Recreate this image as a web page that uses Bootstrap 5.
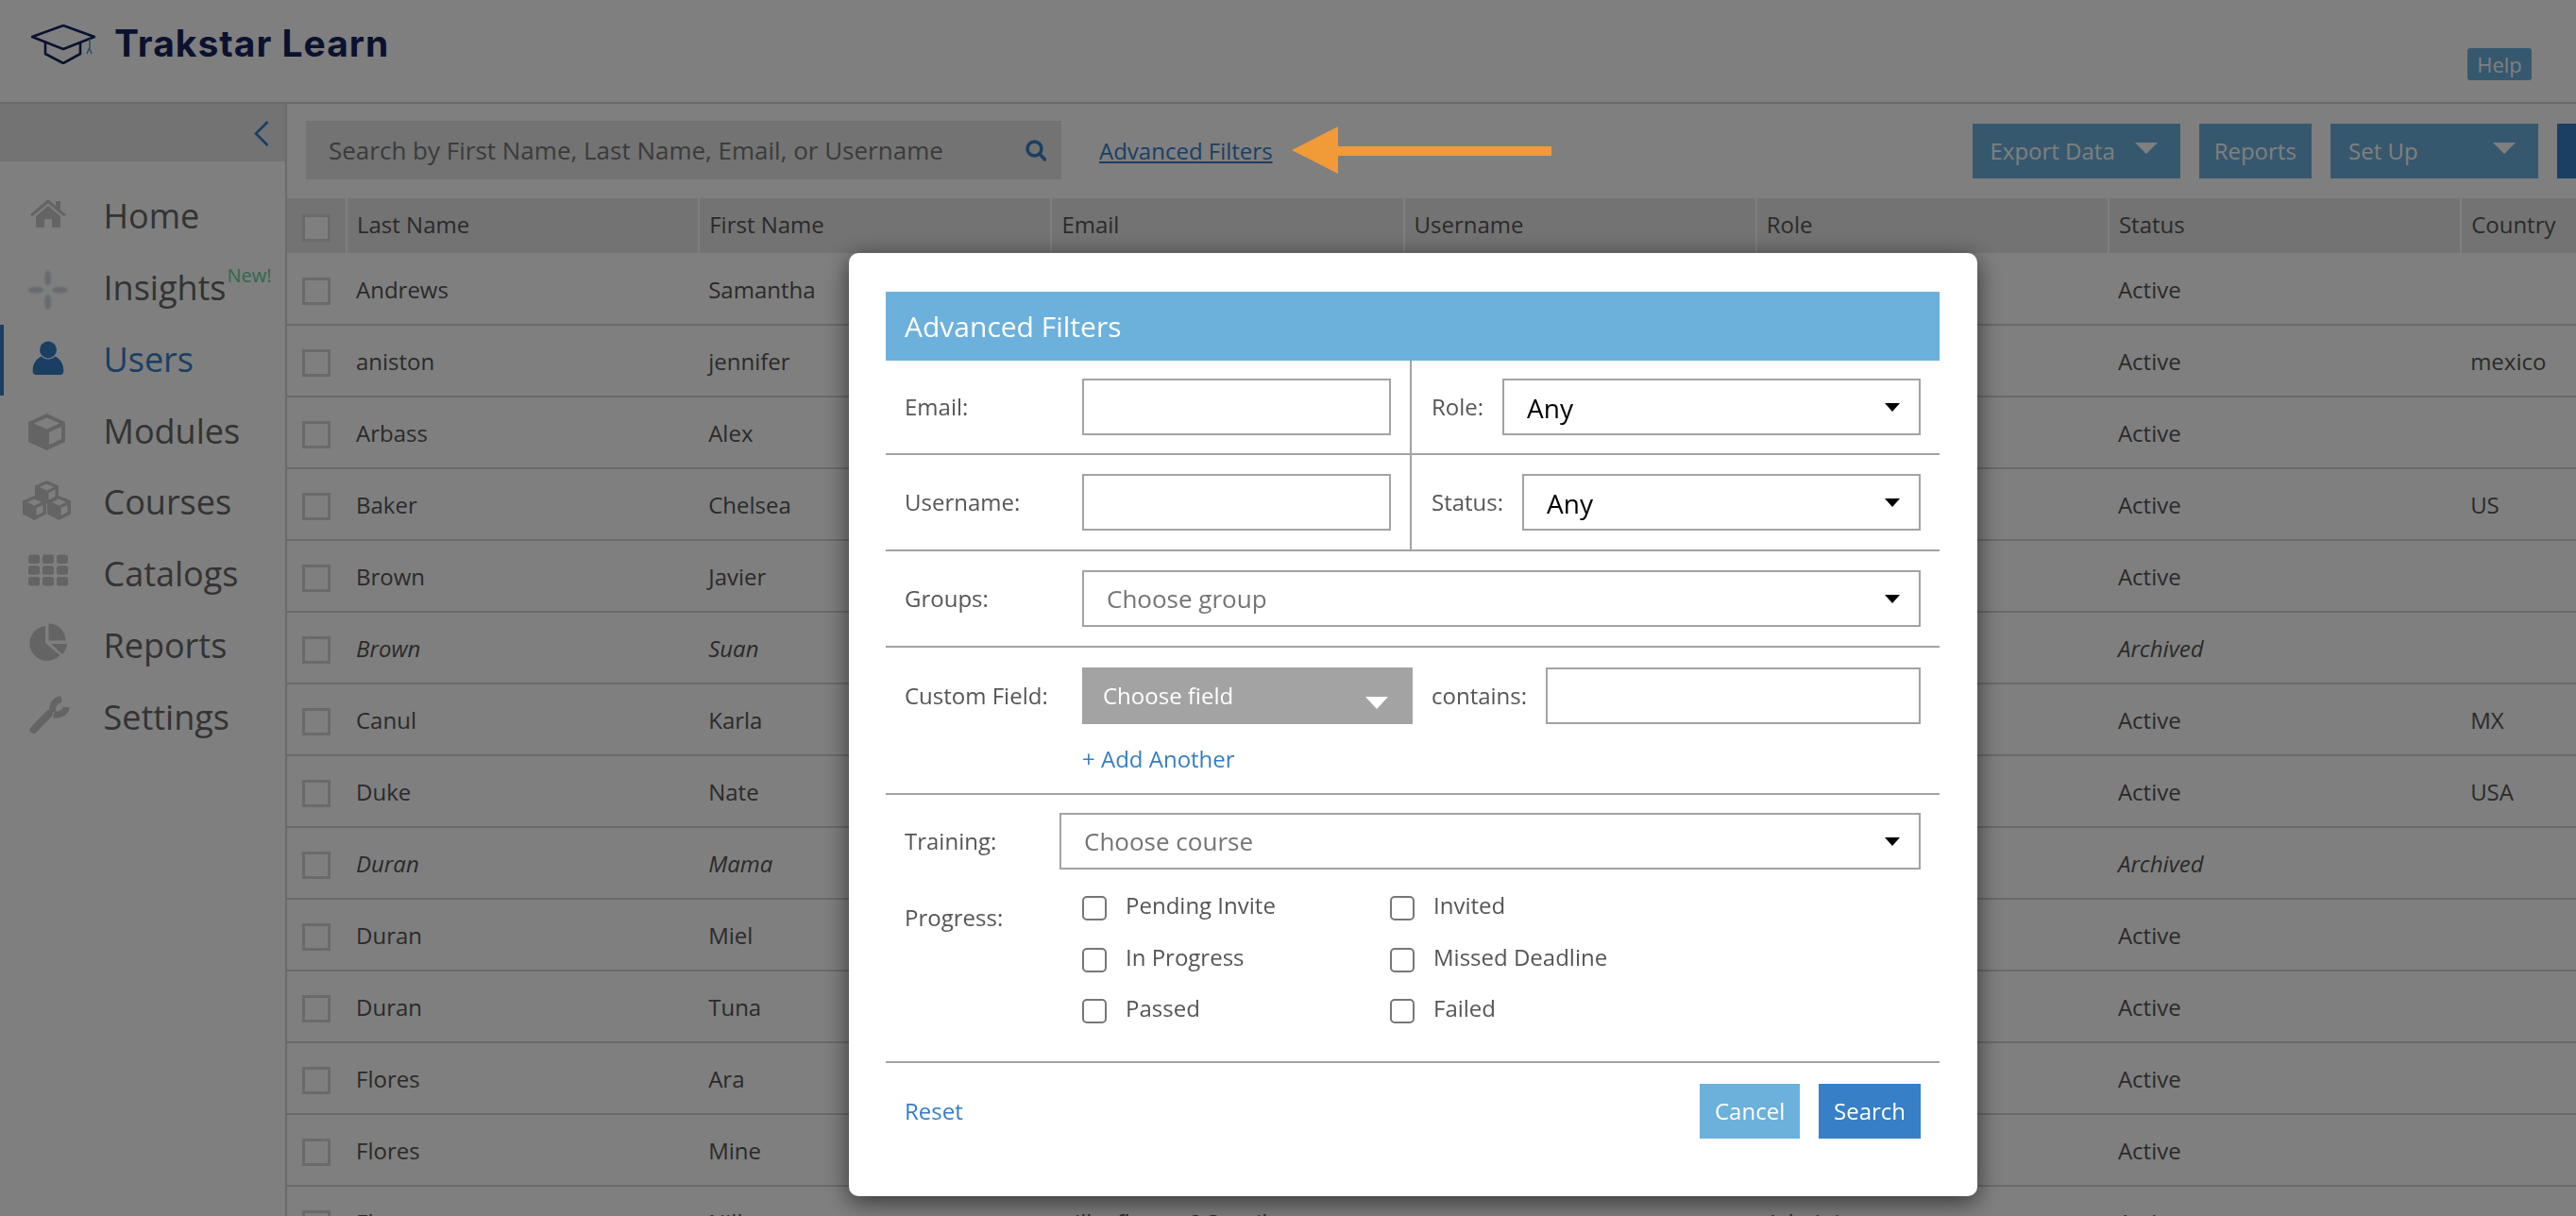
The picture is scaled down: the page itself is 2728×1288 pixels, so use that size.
<!DOCTYPE html>
<html lang="en">

<head>
  <meta charset="UTF-8" />
  <title>Trakstar Learn - Users</title>
  <link href="https://cdn.jsdelivr.net/npm/bootstrap@5.3.2/dist/css/bootstrap.min.css" rel="stylesheet" />
  <style>
    html, body { height: 100%; }
    body { font-family: "Open Sans", sans-serif; font-size: 24px; color: #555; overflow: hidden; background: #fff; }

    /* top bar */
    .top-bar { height: 110px; border-bottom: 2px solid #d4d4d4; padding: 26px 47px 0 33px; }
    .brand-name { font-family: Inter, sans-serif; font-weight: 700; font-size: 39px; line-height: 40px; color: #14245f; margin-left: 20px; letter-spacing: 1px; }
    .help-btn { margin-top: 25px; height: 34px; width: 68px; padding: 0; font-size: 22px; line-height: 34px; border: 0; border-radius: 3px; background: #6cb0dc; color: #fff; }

    /* sidebar */
    .page-body { height: 1178px; }
    .side-col { width: 304px; flex: none; border-right: 2px solid #d4d4d4; }
    .side-toggle { height: 61px; background: #e6e6e6; padding: 18px 17px 0 0; margin-bottom: 21px; }
    .side-link { height: 75.75px; color: #666; font-size: 36px; text-decoration: none; border-left: 4px solid transparent; padding-left: 20px; padding-bottom: 1px; }
    .side-link.current { color: #357ec7; border-left-color: #357ec7; }
    .side-link svg { margin-right: 29.5px; flex: none; }
    .side-new { font-size: 20px; line-height: 1; color: #5dd39a; align-self: flex-start; margin-top: 14px; margin-left: 1px; }
    .ico { fill: #c8c8c8; }
    .current .ico { fill: #357ec7; }
    .soft-ico { filter: blur(1px); }

    /* toolbar */
    .main-col { min-width: 0; }
    .tool-bar { height: 100px; padding-left: 20px; }
    .search-box { width: 800px; height: 62px; background: #e6e6e6; padding: 0 16px 0 24px; margin-top: -2px; color: #777; font-size: 26px; }
    .adv-link { margin-left: 40px; color: #357ec7; }
    .tool-btn { height: 58px; margin-left: 20px; padding: 0 24px 0 19px; border: 0; border-radius: 0; font-size: 24px; background: #6cb0dc; color: #fff; }
    .tool-btn:hover { background: #6cb0dc; color: #fff; }
    .tool-btn.dropdown-toggle { width: 220px; display: flex; align-items: center; justify-content: space-between; }
    .tool-btn.dropdown-toggle::after { margin: -6px 0 0; border-top: 12px solid #fff; border-left: 12px solid transparent; border-right: 12px solid transparent; border-bottom: 0; }
    .tool-btn.report-btn { width: 119.5px; padding: 0; }
    .tool-btn.edge-btn { width: 20px; padding: 0; background: #357ec7; }

    /* users table */
    .user-grid { width: 2676px; table-layout: fixed; margin: 0; color: #555; }
    .user-grid th, .user-grid td { padding: 0 10px; vertical-align: middle; font-weight: 400; background: transparent; color: #555; box-shadow: none; }
    .user-grid th { height: 58px; padding-bottom: 3px; background: #e6e6e6; border: 0; border-right: 2px solid #fff; }
    .user-grid td { height: 76px; padding-top: 2px; border-bottom: 2px solid #d4d4d4; }
    .user-grid .check-cell { width: 63px; padding: 5px 0 0 16px; }
    .user-grid col.data-col { width: 373.2px; }
    .grid-check[type=checkbox] { width: 30px; height: 29px; margin: 0; display: block; float: none; border: 3px solid #d4d4d4; border-radius: 0; background-color: #fff; }

    /* annotation arrow */
    .note-arrow { position: fixed; left: 1368px; top: 134px; z-index: 1060; }

    /* modal */
    .filter-dialog { max-width: none; width: 1195px; margin: 268px 0 0 899px; }
    .filter-box { height: 999px; display: block; border: 0; border-radius: 10px; padding: 41px 40px 0 39px; box-shadow: 0 6px 26px rgba(0, 0, 0, .6); }
    .filter-title { height: 73px; background: #6cb0dc; color: #fff; font-size: 30px; padding-left: 20px; }
    .filter-row { border-bottom: 2px solid #a3a3a3; padding: 0 20px; }
    .row-a { height: 100px; }
    .row-b { height: 102px; }
    .row-c { height: 156px; padding-top: 21px; }
    .half-left { width: 557px; height: 100%; flex: none; padding: 0 20px; margin-left: -20px; border-right: 2px solid #a3a3a3; }
    .half-right { padding-left: 21px; flex-grow: 1; min-width: 0; gap: 20px; }
    .filter-label { width: 188px; flex: none; }
    .filter-input { height: 60px; border: 2px solid #a3a3a3; border-radius: 0; font-size: 24px; padding: 0 12px; flex-grow: 1; min-width: 0; width: auto; }
    .filter-select { height: 60px; border: 2px solid #a3a3a3; border-radius: 0; font-size: 28px; line-height: 1.3; padding: 2px 40px 0 24px; color: #000; flex-grow: 1; min-width: 0; width: auto;
      background-image: url("data:image/svg+xml,%3csvg xmlns='http://www.w3.org/2000/svg' viewBox='0 0 16 9'%3e%3cpath d='M0 0h16L8 9z'/%3e%3c/svg%3e");
      background-size: 16px 9px; background-position: right 20px center; }
    .filter-select.is-empty { color: #757575; font-size: 26px; padding-top: 2px; }
    .field-btn { width: 350px; height: 60px; flex: none; display: flex; align-items: center; justify-content: space-between; padding: 0 26px 0 22px; border: 0; border-radius: 0; background: #a3a3a3; color: #fff; font-size: 24px; margin-right: 20px; }
    .field-btn:hover { background: #a3a3a3; color: #fff; }
    .field-btn::after { margin: 14px 0 0; border-top: 13px solid #fff; border-left: 12px solid transparent; border-right: 12px solid transparent; border-bottom: 0; }
    .contains-label { margin-right: 20px; }
    .blue-link { color: #357ec7; text-decoration: none; }
    .add-link { display: block; line-height: 32px; margin: 21px 0 0 188px; }
    .train-line { padding: 19px 20px 0; }
    .train-label { width: 164px; flex: none; }
    .progress-line { padding: 0 20px; margin-top: 28px; height: 177px; border-bottom: 2px solid #a3a3a3; }
    .progress-label { width: 188px; flex: none; padding-top: 5px; }
    .check-grid { display: grid; grid-template-columns: 326px 326px; grid-auto-rows: 54.5px; }
    .check-item { display: flex; gap: 20px; align-items: flex-start; margin: 0; padding: 0; min-height: 0; }
    .check-item .form-check-input[type=checkbox] { width: 26px; height: 26px; margin: 0; float: none; flex: none; border: 2.5px solid #777; border-radius: 5px; }
    .check-item .form-check-label { line-height: 20px; }
    .filter-foot { padding: 22px 20px 0; gap: 20px; }
    .foot-btn { height: 58px; padding: 0 16px; border: 0; border-radius: 0; font-size: 24px; color: #fff; }
    .foot-btn.cancel-btn, .foot-btn.cancel-btn:hover { background: #6cb0dc; color: #fff; width: 106px; }
    .foot-btn.search-btn, .foot-btn.search-btn:hover { background: #377fc7; color: #fff; width: 108px; }
  </style>
</head>

<body>
  <header class="top-bar d-flex align-items-start">
    <svg width="68" height="42" viewBox="0 0 68 42" fill="none" stroke="#14245f" stroke-width="2.6" stroke-linejoin="round">
      <path d="M1 13 34 1l33 12-33 13z" />
      <path d="M15 18v13l19 10 18-10V18" />
      <path d="M62 15v10" stroke="#4aa3c7" stroke-width="1.5" />
      <path d="M59 31l2.5-6 2.5 6" stroke="#4aa3c7" stroke-width="1.5" />
    </svg>
    <div class="brand-name">Trakstar Learn</div>
    <button type="button" class="btn help-btn ms-auto">Help</button>
  </header>

  <div class="page-body d-flex">
    <nav class="side-col">
      <div class="side-toggle d-flex justify-content-end">
        <svg width="16" height="27" viewBox="0 0 16 27" fill="none" stroke="#357ec7" stroke-width="2.6">
          <path d="M14.5 1 2 13.5 14.5 26" />
        </svg>
      </div>

      <a class="side-link d-flex align-items-center" href="#">
        <svg class="ico" width="56" height="50" viewBox="0 0 56 50">
          <path d="M8 23 27 7l8 7V9h5v9.5l6 4.5-2 2.500-17-14-17 14z" />
          <path d="M14 25 27 14l13 11v12h-9v-9h-8v9h-9z" />
        </svg>
        Home
      </a>
      <a class="side-link d-flex align-items-center" href="#">
        <svg class="soft-ico" width="56" height="50" viewBox="0 0 56 50" fill="#cdd6e0">
          <ellipse cx="26.700" cy="14.500" rx="3.500" ry="8.500" />
          <ellipse cx="26.700" cy="40" rx="3.500" ry="8.500" />
          <ellipse cx="14" cy="27.300" rx="8.500" ry="3.500" />
          <ellipse cx="39.500" cy="27.300" rx="8.500" ry="3.500" />
        </svg>
        Insights<span class="side-new">New!</span>
      </a>
      <a class="side-link current d-flex align-items-center" href="#">
        <svg class="ico" width="56" height="50" viewBox="0 0 56 50">
          <circle cx="27" cy="14.500" r="9" />
          <path d="M10.700 36c0-7 4-12 9-14.500 2 2 4.500 3 7.300 3s5.300-1 7.300-3c5 2.500 9 7.500 9 14.500v1a4 4 0 0 1-4 4H14.700a4 4 0 0 1-4-4z" />
        </svg>
        Users
      </a>
      <a class="side-link d-flex align-items-center" href="#">
        <svg width="56" height="50" viewBox="0 0 56 50">
          <path fill="#c8c8c8" d="M25.500 6 45 15v21l-19.500 9L6 36V15zM25.500 10.500 12 16.500l13.500 6 13.500-6zM28 26v13l13-6V20z" />
        </svg>
        Modules
      </a>
      <a class="side-link d-flex align-items-center" href="#">
        <svg width="56" height="50" viewBox="0 0 56 50" fill="#c8c8c8">
          <path d="M25.500 2 38 7.500v13l-12.500 6L13 20.500v-13zM25.500 5.500 18 9l7.500 3.500L33 9zM27.500 15v7.500l7-3.500v-7.500z" />
          <path d="M12.500 18 25 23.500v14L12.500 44 0 37.500v-14zM12.500 21.500 5 25l7.500 3.500L20 25zM14.500 31v8l7-3.500V28z" />
          <path d="M38.500 18 51 23.500v14L38.500 44 26 37.500v-14zM38.500 21.500 31 25l7.500 3.500L46 25zM40.500 31v8l7-3.500V28z" />
        </svg>
        Courses
      </a>
      <a class="side-link d-flex align-items-center" href="#">
        <svg class="ico" width="56" height="50" viewBox="0 0 56 50">
          <rect x="6" y="4.500" width="12" height="9.500" rx="2.500" /><rect x="21" y="4.500" width="12" height="9.500" rx="2.500" /><rect x="36" y="4.500" width="12" height="9.500" rx="2.500" />
          <rect x="6" y="16.200" width="12" height="9.500" rx="2.500" /><rect x="21" y="16.200" width="12" height="9.500" rx="2.500" /><rect x="36" y="16.200" width="12" height="9.500" rx="2.500" />
          <rect x="6" y="28" width="12" height="9.500" rx="2.500" /><rect x="21" y="28" width="12" height="9.500" rx="2.500" /><rect x="36" y="28" width="12" height="9.500" rx="2.500" />
        </svg>
        Catalogs
      </a>
      <a class="side-link d-flex align-items-center" href="#">
        <svg class="ico" width="56" height="50" viewBox="0 0 56 50">
          <path d="M24 4A18.500 18.500 0 1 0 39.500 35L24 22z" />
          <path d="M27.500 1.500a18 18 0 0 1 18 18h-18z" />
          <path d="M30 23h17a19 19 0 0 1-5 11z" />
        </svg>
        Reports
      </a>
      <a class="side-link d-flex align-items-center" href="#">
        <svg width="56" height="50" viewBox="0 0 56 50" fill="none" stroke="#c8c8c8">
          <path d="M11.500 38 28 21" stroke-width="8" stroke-linecap="round" />
          <path d="M46 14a11 8 0 0 1-13 8M41 5.500a11 11 0 0 0-9 14" stroke-width="7" />
        </svg>
        Settings
      </a>
    </nav>

    <main class="main-col flex-grow-1 overflow-hidden">
      <div class="tool-bar d-flex align-items-center">
        <div class="search-box d-flex align-items-center justify-content-between">
          <span>Search by First Name, Last Name, Email, or Username</span>
          <svg width="22" height="23" viewBox="0 0 22 23" fill="none" stroke="#357ec7" stroke-width="3.5" stroke-linecap="round">
            <circle cx="9.500" cy="9.500" r="7.500" />
            <path d="m15.500 15.500 5 5.500" />
          </svg>
        </div>
        <a class="adv-link" href="#">Advanced Filters</a>
        <button type="button" class="btn tool-btn dropdown-toggle ms-auto">Export Data</button>
        <button type="button" class="btn tool-btn report-btn">Reports</button>
        <button type="button" class="btn tool-btn dropdown-toggle">Set Up</button>
        <button type="button" class="btn tool-btn edge-btn" aria-label="More"></button>
      </div>

      <table class="table user-grid">
        <colgroup>
          <col />
          <col class="data-col" /><col class="data-col" /><col class="data-col" /><col class="data-col" /><col class="data-col" /><col class="data-col" /><col class="data-col" />
        </colgroup>
        <thead>
          <tr>
            <th class="check-cell"><input class="form-check-input grid-check" type="checkbox" aria-label="Select all" /></th>
            <th>Last Name</th><th>First Name</th><th>Email</th><th>Username</th><th>Role</th><th>Status</th><th>Country</th>
          </tr>
        </thead>
        <tbody>
          <tr><td class="check-cell"><input class="form-check-input grid-check" type="checkbox" /></td><td>Andrews</td><td>Samantha</td><td></td><td></td><td></td><td>Active</td><td></td></tr>
          <tr><td class="check-cell"><input class="form-check-input grid-check" type="checkbox" /></td><td>aniston</td><td>jennifer</td><td></td><td></td><td></td><td>Active</td><td>mexico</td></tr>
          <tr><td class="check-cell"><input class="form-check-input grid-check" type="checkbox" /></td><td>Arbass</td><td>Alex</td><td></td><td></td><td></td><td>Active</td><td></td></tr>
          <tr><td class="check-cell"><input class="form-check-input grid-check" type="checkbox" /></td><td>Baker</td><td>Chelsea</td><td></td><td></td><td></td><td>Active</td><td>US</td></tr>
          <tr><td class="check-cell"><input class="form-check-input grid-check" type="checkbox" /></td><td>Brown</td><td>Javier</td><td></td><td></td><td></td><td>Active</td><td></td></tr>
          <tr class="fst-italic"><td class="check-cell"><input class="form-check-input grid-check" type="checkbox" /></td><td>Brown</td><td>Suan</td><td></td><td></td><td></td><td>Archived</td><td></td></tr>
          <tr><td class="check-cell"><input class="form-check-input grid-check" type="checkbox" /></td><td>Canul</td><td>Karla</td><td></td><td></td><td></td><td>Active</td><td>MX</td></tr>
          <tr><td class="check-cell"><input class="form-check-input grid-check" type="checkbox" /></td><td>Duke</td><td>Nate</td><td></td><td></td><td></td><td>Active</td><td>USA</td></tr>
          <tr class="fst-italic"><td class="check-cell"><input class="form-check-input grid-check" type="checkbox" /></td><td>Duran</td><td>Mama</td><td></td><td></td><td></td><td>Archived</td><td></td></tr>
          <tr><td class="check-cell"><input class="form-check-input grid-check" type="checkbox" /></td><td>Duran</td><td>Miel</td><td></td><td></td><td></td><td>Active</td><td></td></tr>
          <tr><td class="check-cell"><input class="form-check-input grid-check" type="checkbox" /></td><td>Duran</td><td>Tuna</td><td></td><td></td><td></td><td>Active</td><td></td></tr>
          <tr><td class="check-cell"><input class="form-check-input grid-check" type="checkbox" /></td><td>Flores</td><td>Ara</td><td></td><td></td><td></td><td>Active</td><td></td></tr>
          <tr><td class="check-cell"><input class="form-check-input grid-check" type="checkbox" /></td><td>Flores</td><td>Mine</td><td></td><td></td><td></td><td>Active</td><td></td></tr>
          <tr><td class="check-cell"><input class="form-check-input grid-check" type="checkbox" /></td><td>Flores</td><td>Nilka</td><td>nilka.flores+2@mail.com</td><td></td><td>Administrator</td><td>Active</td><td></td></tr>
        </tbody>
      </table>
    </main>
  </div>

  <div class="modal-backdrop show"></div>

  <div class="modal d-block" tabindex="-1">
    <div class="modal-dialog filter-dialog">
      <div class="modal-content filter-box">
        <div class="filter-title d-flex align-items-center">Advanced Filters</div>

        <div class="filter-row row-a d-flex align-items-center">
          <div class="half-left d-flex align-items-center">
            <label class="filter-label" for="fEmail">Email:</label>
            <input class="form-control filter-input" id="fEmail" type="text" />
          </div>
          <div class="half-right d-flex align-items-center">
            <label for="fRole">Role:</label>
            <select class="form-select filter-select" id="fRole"><option>Any</option></select>
          </div>
        </div>

        <div class="filter-row row-b d-flex align-items-center">
          <div class="half-left d-flex align-items-center">
            <label class="filter-label" for="fUser">Username:</label>
            <input class="form-control filter-input" id="fUser" type="text" />
          </div>
          <div class="half-right d-flex align-items-center">
            <label for="fStatus">Status:</label>
            <select class="form-select filter-select" id="fStatus"><option>Any</option></select>
          </div>
        </div>

        <div class="filter-row row-b d-flex align-items-center">
          <label class="filter-label" for="fGroup">Groups:</label>
          <select class="form-select filter-select is-empty" id="fGroup"><option>Choose group</option></select>
        </div>

        <div class="filter-row row-c">
          <div class="d-flex align-items-center">
            <span class="filter-label">Custom Field:</span>
            <button type="button" class="btn field-btn dropdown-toggle">Choose field</button>
            <label for="fContains" class="contains-label">contains:</label>
            <input class="form-control filter-input" id="fContains" type="text" />
          </div>
          <a class="blue-link add-link" href="#">+ Add Another</a>
        </div>

        <div class="train-line d-flex align-items-center">
          <label class="train-label" for="fCourse">Training:</label>
          <select class="form-select filter-select is-empty" id="fCourse"><option>Choose course</option></select>
        </div>

        <div class="progress-line d-flex">
          <div class="progress-label">Progress:</div>
          <div class="check-grid">
            <div class="form-check check-item"><input class="form-check-input" type="checkbox" id="p1" /><label class="form-check-label" for="p1">Pending Invite</label></div>
            <div class="form-check check-item"><input class="form-check-input" type="checkbox" id="p2" /><label class="form-check-label" for="p2">Invited</label></div>
            <div class="form-check check-item"><input class="form-check-input" type="checkbox" id="p3" /><label class="form-check-label" for="p3">In Progress</label></div>
            <div class="form-check check-item"><input class="form-check-input" type="checkbox" id="p4" /><label class="form-check-label" for="p4">Missed Deadline</label></div>
            <div class="form-check check-item"><input class="form-check-input" type="checkbox" id="p5" /><label class="form-check-label" for="p5">Passed</label></div>
            <div class="form-check check-item"><input class="form-check-input" type="checkbox" id="p6" /><label class="form-check-label" for="p6">Failed</label></div>
          </div>
        </div>

        <div class="filter-foot d-flex align-items-center">
          <a class="blue-link me-auto" href="#">Reset</a>
          <button type="button" class="btn foot-btn cancel-btn">Cancel</button>
          <button type="button" class="btn foot-btn search-btn">Search</button>
        </div>
      </div>
    </div>
  </div>

  <svg class="note-arrow" width="276" height="50" viewBox="0 0 276 50">
    <path fill="#f19a38" d="M0 25 49 0v21h226v10H49v19z" />
  </svg>

  <script src="https://cdn.jsdelivr.net/npm/bootstrap@5.3.2/dist/js/bootstrap.bundle.min.js"></script>
</body>

</html>
